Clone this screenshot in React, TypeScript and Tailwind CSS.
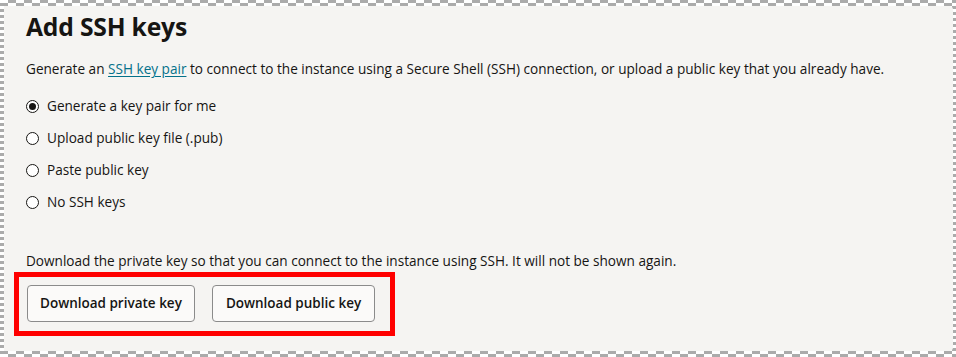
import React from "react";

type Option = { label: string; checked?: boolean };

const options: Option[] = [
	{ label: "Generate a key pair for me", checked: true },
	{ label: "Upload public key file (.pub)" },
	{ label: "Paste public key" },
	{ label: "No SSH keys" },
];

const Radio = ({ label, checked }: Option) => (
	<label className="flex items-center h-[32px] cursor-pointer">
		<span className="w-[13px] h-[13px] rounded-full border border-[#161513] flex items-center justify-center mr-[8px] bg-white">
			{checked && <span className="w-[7px] h-[7px] rounded-full bg-[#161513]" />}
		</span>
		<span>{label}</span>
	</label>
);

export default function App() {
	return (
		<div className="w-[956px] h-[357px] pt-[6px] pl-[4px] pr-[3px] pb-[6px] bg-[conic-gradient(#ababab_25%,#ffffff_0_50%,#ababab_0_75%,#ffffff_0)] bg-[length:16px_6px] font-['Open_Sans',sans-serif] text-[#161513] text-[13.6px]">
			<div className="h-full bg-[#f5f4f2] rounded-r-[4px] pl-[22px] pt-[5px]">
				<h2 className="text-[24.7px] font-bold leading-[32px] tracking-[-0.2px]">Add SSH keys</h2>
				<p className="mt-[16px] leading-[20px]">
					Generate an{" "}
					<a href="#" className="text-[#04718a] underline underline-offset-2">
						SSH key pair
					</a>{" "}
					to connect to the instance using a Secure Shell (SSH) connection, or upload a public key that you already have.
				</p>
				<div className="mt-[11px] flex flex-col">
					{options.map((o) => (
						<Radio key={o.label} {...o} />
					))}
				</div>
				<p className="mt-[33px] leading-[20px]">
					Download the private key so that you can connect to the instance using SSH. It will not be shown again.
				</p>
				<div className="mt-[1px] -ml-[12px] w-fit border-[5px] border-[#ff0000] pl-[8px] pr-[15px] pt-[8px] pb-[9px] flex gap-[17px]">
					<button className="h-[37px] px-[12px] whitespace-nowrap rounded-[4px] border border-[#8b8b8b] bg-[#fbfaf9] font-semibold text-[13.5px]">
						Download private key
					</button>
					<button className="h-[37px] px-[13px] whitespace-nowrap rounded-[4px] border border-[#8b8b8b] bg-[#fbfaf9] font-semibold text-[13.5px]">
						Download public key
					</button>
				</div>
			</div>
		</div>
	);
}
